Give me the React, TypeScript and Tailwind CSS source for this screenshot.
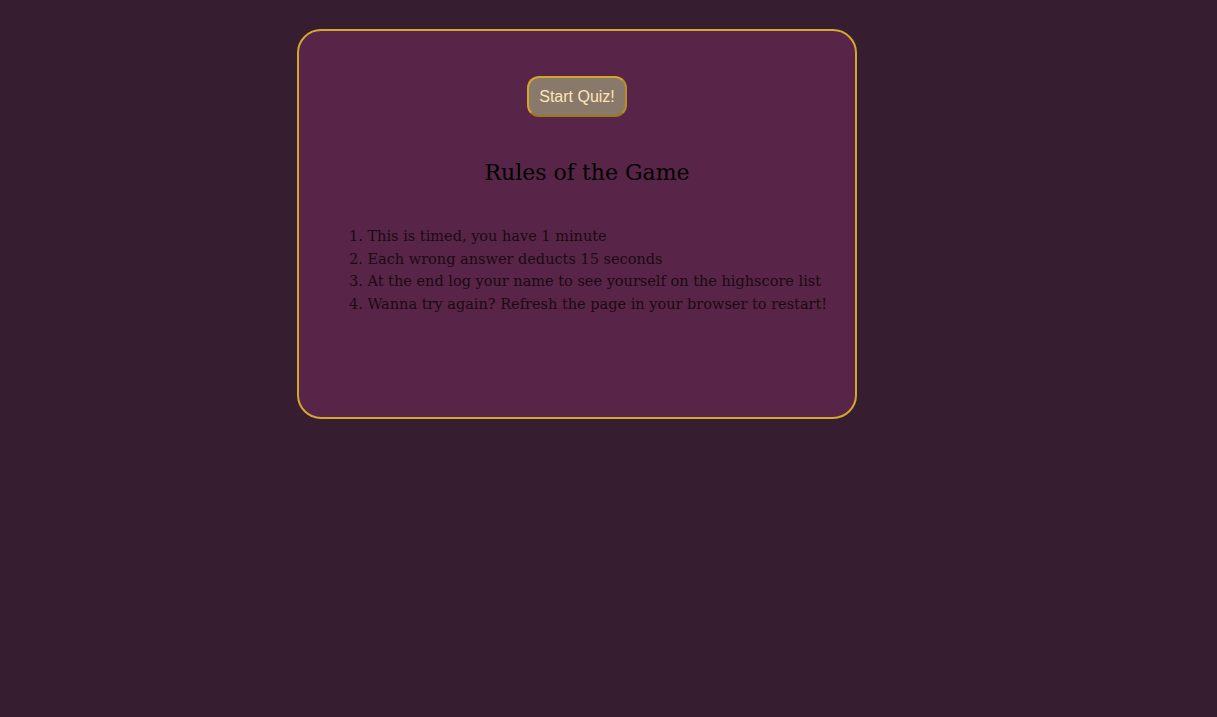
export default function App() {
  const rules = [
    "This is timed, you have 1 minute",
    "Each wrong answer deducts 15 seconds",
    "At the end log your name to see yourself on the highscore list",
    "Wanna try again? Refresh the page in your browser to restart!",
  ];

  return (
    <div className="min-h-[717px] w-full bg-[#361e30] pt-[29px] pl-[297px]">
      <div className="flex h-[390px] w-[560px] flex-col items-center rounded-[24px] border-2 border-[#d6a72e] bg-[#582548] pt-[45px]">
        <button className="rounded-[12px] border-2 border-[#d2a62c] border-b-[#9a7a1e] border-r-[#b38f26] bg-[#89796a] px-[10px] py-[8px] font-['Liberation_Sans',Arial,sans-serif] text-[16px] leading-[21px] text-[#fbe6b8]">
          Start Quiz!
        </button>

        <h2 className="mt-[42px] pl-[20px] font-['DejaVu_Serif',serif] text-[22px] leading-[28px] text-black">
          Rules of the Game
        </h2>

        <ol className="mt-[38px] w-full list-inside list-decimal pl-[50px] font-['DejaVu_Serif',serif] text-[14.5px] leading-[22.7px] text-[#1a0a12]">
          {rules.map((rule) => (
            <li key={rule}>{rule}</li>
          ))}
        </ol>
      </div>
    </div>
  );
}
